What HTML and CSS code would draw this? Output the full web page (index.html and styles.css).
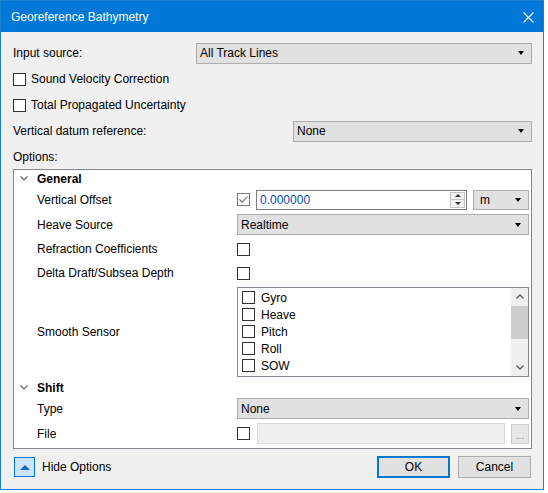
FILE: index.html
```html
<!DOCTYPE html>
<html lang="en">
<head>
  <meta charset="UTF-8" />
  <title>Georeference Bathymetry</title>
  <link rel="stylesheet" href="styles.css">
</head>
<body>

  <div class="window">
    <div class="titlebar">
      <span class="title">Georeference Bathymetry</span>
      <svg class="close" width="11" height="11" viewBox="0 0 11 11">
        <path d="M0.5 0.5L10.5 10.5M10.5 0.5L0.5 10.5" stroke="#fff" stroke-width="1.1" fill="none"/>
      </svg>
    </div>

    <div class="content">
      <div class="row field source">
        <span>Input source:</span>
        <div class="combo"><span>All Track Lines</span><i class="arrow"></i></div>
      </div>
      <div class="row">
        <span class="check"></span><span class="check-text">Sound Velocity Correction</span>
      </div>
      <div class="row">
        <span class="check"></span><span class="check-text">Total Propagated Uncertainty</span>
      </div>
      <div class="row field datum">
        <span>Vertical datum reference:</span>
        <div class="combo"><span>None</span><i class="arrow"></i></div>
      </div>
      <div class="row options-label">Options:</div>

      <!-- Property grid -->
      <div class="panel">
        <div class="group">
          <svg class="chevron" width="8" height="5" viewBox="0 0 8 5"><path d="M0.5 0.5L4 4L7.5 0.5" stroke="#6b6b6b" stroke-width="1.2" fill="none"/></svg>
          <b>General</b>
        </div>

        <div class="prop prop-25">
          <span class="name">Vertical Offset</span>
          <div class="value">
            <span class="check checked">
              <svg width="11" height="11" viewBox="0 0 11 11"><path d="M1.5 5.5L4.2 8.2L9.5 2.5" stroke="#6d6d6d" stroke-width="1.1" fill="none"/></svg>
            </span>
            <div class="textbox">
              <span class="num">0.000000</span>
              <div class="spin">
                <div class="spin-half"><i class="tri-up"></i></div>
                <div class="spin-half"><i class="tri-down"></i></div>
              </div>
            </div>
            <div class="combo unit"><span>m</span><i class="arrow"></i></div>
          </div>
        </div>

        <div class="prop prop-25">
          <span class="name">Heave Source</span>
          <div class="value">
            <div class="combo wide"><span>Realtime</span><i class="arrow"></i></div>
          </div>
        </div>

        <div class="prop prop-24">
          <span class="name">Refraction Coefficients</span>
          <div class="value"><span class="check"></span></div>
        </div>

        <div class="prop prop-24">
          <span class="name">Delta Draft/Subsea Depth</span>
          <div class="value"><span class="check"></span></div>
        </div>

        <div class="prop prop-list">
          <span class="name">Smooth Sensor</span>
          <div class="value">
            <div class="listbox">
              <div class="items">
                <div class="item"><span class="check"></span>Gyro</div>
                <div class="item"><span class="check"></span>Heave</div>
                <div class="item"><span class="check"></span>Pitch</div>
                <div class="item"><span class="check"></span>Roll</div>
                <div class="item"><span class="check"></span>SOW</div>
              </div>
              <div class="scrollbar">
                <div class="sb-btn">
                  <svg width="8" height="5" viewBox="0 0 8 5"><path d="M0.5 4.5L4 1L7.5 4.5" stroke="#606060" stroke-width="1.4" fill="none"/></svg>
                </div>
                <div class="sb-track"><div class="sb-thumb"></div></div>
                <div class="sb-btn">
                  <svg width="8" height="5" viewBox="0 0 8 5"><path d="M0.5 0.5L4 4L7.5 0.5" stroke="#606060" stroke-width="1.4" fill="none"/></svg>
                </div>
              </div>
            </div>
          </div>
        </div>

        <div class="group">
          <svg class="chevron" width="8" height="5" viewBox="0 0 8 5"><path d="M0.5 0.5L4 4L7.5 0.5" stroke="#6b6b6b" stroke-width="1.2" fill="none"/></svg>
          <b>Shift</b>
        </div>

        <div class="prop prop-25">
          <span class="name">Type</span>
          <div class="value">
            <div class="combo wide"><span>None</span><i class="arrow"></i></div>
          </div>
        </div>

        <div class="prop prop-25">
          <span class="name">File</span>
          <div class="value file">
            <span class="check"></span>
            <div class="path"></div>
            <div class="browse">...</div>
          </div>
        </div>
      </div>

      <div class="footer">
        <div class="toggle">
          <span class="toggle-icon"><i class="tri-blue"></i></span>
          <span>Hide Options</span>
        </div>
        <div class="buttons">
          <button class="btn default">OK</button>
          <button class="btn">Cancel</button>
        </div>
      </div>
    </div>
  </div>

</body>
</html>
```

FILE: styles.css
```css
html, body {
  margin: 0;
  padding: 0;
  background: #fff;
}

body {
  font-family: "Segoe UI", "Liberation Sans", sans-serif;
  font-size: 12px;
  color: #000;
}

.window {
  width: 544px;
  height: 490px;
  box-sizing: border-box;
  border: 1px solid #1a7fd6;
  background: #f0f0f0;
  display: flex;
  flex-direction: column;
}

.titlebar {
  height: 31px;
  flex: none;
  background: #0078d7;
  display: flex;
  align-items: center;
  padding: 1px 9px 0 10px;
  box-sizing: border-box;
  color: #fff;
}

.close {
  margin-left: auto;
}

.content {
  padding: 8px 11px 0 12px;
}

.row {
  height: 26px;
  display: flex;
  align-items: center;
}

.field {
  display: grid;
  align-items: center;
}

.source { grid-template-columns: 183px 1fr; }
.datum { grid-template-columns: 280px 1fr; }

.options-label {
  height: 25px;
}

/* combo boxes */
.combo {
  height: 21px;
  box-sizing: border-box;
  border: 1px solid #adadad;
  background: #e1e1e1;
  display: flex;
  align-items: center;
  justify-content: space-between;
  padding: 0 7px 0 3px;
}

.arrow {
  width: 0;
  height: 0;
  border-left: 3.5px solid transparent;
  border-right: 3.5px solid transparent;
  border-top: 4px solid #000;
}

.combo.wide {
  flex: 1;
}

.combo.unit {
  width: 56px;
  height: 20px;
  flex: none;
  padding-left: 6px;
}

/* checkboxes */
.check {
  width: 13px;
  height: 13px;
  box-sizing: border-box;
  border: 1px solid #333;
  background: #fff;
  flex: none;
  display: inline-flex;
  align-items: center;
  justify-content: center;
}

.check.checked {
  border-color: #7a7a7a;
}

.check-text {
  margin-left: 5px;
}

/* property grid */
.panel {
  height: 280px;
  box-sizing: border-box;
  border: 1px solid #828790;
  background: #fff;
}

.group {
  height: 17px;
  display: flex;
  align-items: center;
  padding-left: 6px;
}

.group b {
  margin-left: 9px;
}

.prop {
  display: grid;
  grid-template-columns: 223px 1fr;
  align-items: center;
  padding-right: 2px;
}

.prop-25 { height: 25px; }
.prop-24 { height: 24px; }
.prop-list { height: 94px; }

.prop .name {
  padding-left: 23px;
}

.value {
  display: flex;
  align-items: center;
}

.textbox {
  flex: 1;
  height: 20px;
  margin: 0 6px;
  box-sizing: border-box;
  border: 1px solid #7a7a7a;
  background: #fff;
  display: flex;
  align-items: center;
  padding-left: 3px;
}

.num {
  color: #0a4ab4;
  flex: 1;
}

.spin {
  width: 15px;
  height: 16px;
  margin-right: 1px;
  box-sizing: border-box;
  border: 1px solid #c4c4c4;
  background: #f4f4f4;
  display: flex;
  flex-direction: column;
}

.spin-half {
  flex: 1;
  display: flex;
  align-items: center;
  justify-content: center;
}

.spin-half + .spin-half {
  border-top: 1px solid #c4c4c4;
}

.tri-up, .tri-down {
  width: 0;
  height: 0;
  border-left: 3px solid transparent;
  border-right: 3px solid transparent;
}

.tri-up { border-bottom: 3px solid #333; }
.tri-down { border-top: 3px solid #333; }

/* sensor list */
.listbox {
  flex: 1;
  height: 90px;
  box-sizing: border-box;
  border: 1px solid #828790;
  display: flex;
}

.items {
  flex: 1;
  padding: 1px 0 0 4px;
}

.item {
  height: 17px;
  display: flex;
  align-items: center;
  gap: 6px;
}

.scrollbar {
  width: 17px;
  background: #f0f0f0;
  display: flex;
  flex-direction: column;
}

.sb-btn {
  height: 17px;
  display: flex;
  align-items: center;
  justify-content: center;
}

.sb-track {
  flex: 1;
}

.sb-thumb {
  height: 33px;
  margin-top: 1px;
  background: #cdcdcd;
}

/* file row */
.file .path {
  flex: 1;
  height: 21px;
  margin: 0 6px 0 7px;
  box-sizing: border-box;
  border: 1px solid #d9d9d9;
  background: #f0f0f0;
}

.browse {
  width: 18px;
  height: 20px;
  box-sizing: border-box;
  border: 1px solid #cccccc;
  background: #e6e6e6;
  color: #8d8d8d;
  font-size: 10px;
  text-align: center;
  line-height: 22px;
}

/* bottom bar */
.footer {
  margin-top: 7px;
  height: 22px;
  display: flex;
  align-items: center;
  justify-content: space-between;
}

.toggle {
  display: flex;
  align-items: center;
  gap: 7px;
  margin-left: 1px;
}

.toggle-icon {
  width: 21px;
  height: 20px;
  box-sizing: border-box;
  border: 1px solid #0078d7;
  background: #cce4f7;
  display: flex;
  align-items: center;
  justify-content: center;
}

.tri-blue {
  width: 0;
  height: 0;
  border-left: 5.5px solid transparent;
  border-right: 5.5px solid transparent;
  border-bottom: 5px solid #1b63c6;
}

.buttons {
  display: flex;
  gap: 8px;
  margin-right: 1px;
}

.btn {
  width: 73px;
  height: 22px;
  box-sizing: border-box;
  border: 1px solid #adadad;
  background: #e1e1e1;
  font-family: inherit;
  font-size: 12px;
  color: #000;
  padding: 0;
}

.btn.default {
  border: 2px solid #0078d7;
}
```
